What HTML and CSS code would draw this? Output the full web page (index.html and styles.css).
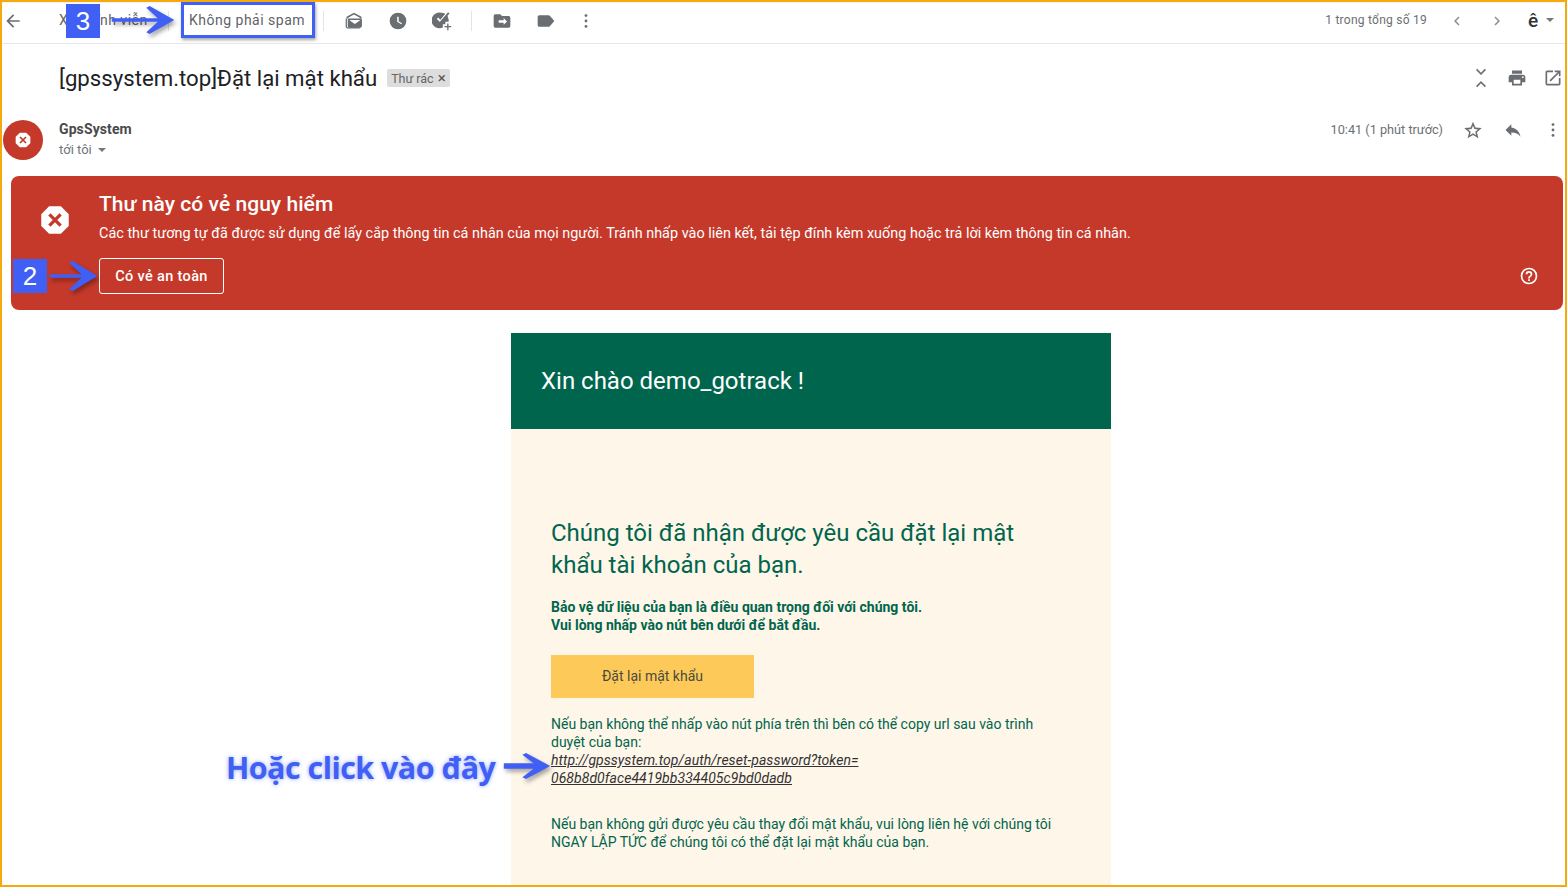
FILE: index.html
```html
<!DOCTYPE html>
<html lang="vi">
<head>
<meta charset="utf-8">
<title>Gmail</title>
<link rel="stylesheet" href="styles.css">
</head>
<body>
<div class="frame">
  <header class="toolbar">
    <svg class="ic back" viewBox="0 0 24 24"><path d="M20 11H7.800l5.600-5.600L12 4l-8 8 8 8 1.400-1.400L7.800 13H20z"/></svg>
    <span class="tb-text del">Xóa vĩnh viễn</span>
    <span class="sep s1"></span>
    <span class="tb-text notspam">Không phải spam</span>
    <span class="sep s2"></span>
    <div class="tb-icons g1">
      <svg class="ic" viewBox="0 0 24 24"><path d="M12 2 3 7v2h2V8l7-3.800L19 8v1h2V7z"/><path fill-rule="evenodd" d="M6 9h14a1.500 1.500 0 0 1 1.500 1.500V18a2 2 0 0 1-2 2H6.500a2 2 0 0 1-2-2v-7.500A1.500 1.500 0 0 1 6 9zm1 2.500 6 4 6-4v-.6H7z"/><path d="M2 9h1.500v10.500H19V21H4a2 2 0 0 1-2-2z"/></svg>
      <svg class="ic" viewBox="0 0 24 24"><path fill-rule="evenodd" d="M12 2a10 10 0 1 0 0 20 10 10 0 0 0 0-20zm-1 5h1.800v5.200l4 2.400-.9 1.400L11 13z"/></svg>
      <svg class="ic" viewBox="0 0 24 24"><path d="M11 2a9.500 9.500 0 0 1 5 1.400l-6 7.100-2.600-2.600-1.600 1.600 4.300 4.300 7.700-9A9.500 9.500 0 0 1 20 11.500a9 9 0 0 1-.2 1.500H16v3h-3v3.900A9.500 9.500 0 1 1 11 2z"/><path d="M18.200 15h1.600v3H23v1.600h-3.200V23h-1.600v-3.400H15V18h3.200z"/><path d="m19.300 1.500 1.700 1.400-11 12.800-1.500-1.500z"/></svg>
    </div>
    <span class="sep s3"></span>
    <div class="tb-icons g2">
      <svg class="ic" viewBox="0 0 24 24"><path fill-rule="evenodd" d="M4 4h6l2 2h8a2 2 0 0 1 2 2v10a2 2 0 0 1-2 2H4a2 2 0 0 1-2-2V6a2 2 0 0 1 2-2zm10 4.500V11H8v3h6v2.500l4-4z"/></svg>
      <svg class="ic" viewBox="0 0 24 24"><path d="M16.600 5.800A2 2 0 0 0 15 5H4a2 2 0 0 0-2 2v10a2 2 0 0 0 2 2h11a2 2 0 0 0 1.600-.8L22 12z"/></svg>
      <svg class="ic dots" viewBox="0 0 24 24"><circle cx="12" cy="5.500" r="1.700"/><circle cx="12" cy="12" r="1.700"/><circle cx="12" cy="18.500" r="1.700"/></svg>
    </div>
    <span class="count">1 trong tổng số 19</span>
    <svg class="chev prev" viewBox="0 0 24 24"><path d="M15.400 7.400 14 6l-6 6 6 6 1.400-1.400L10.800 12z"/></svg>
    <svg class="chev next" viewBox="0 0 24 24"><path d="M8.600 16.600 10 18l6-6-6-6-1.400 1.400L13.200 12z"/></svg>
    <span class="lang">ê</span>
    <span class="caret lang-caret"></span>
  </header>

  <section class="subject-row">
    <h1 class="subject">[gpssystem.top]Đặt lại mật khẩu</h1>
    <span class="chip">Thư rác <b>×</b></span>
    <div class="subject-icons">
      <svg class="ic expand" viewBox="0 0 24 24"><path d="M7.400 1 6 2.400l6 6 6-6L16.600 1 12 5.600zM12 15.600l-6 6L7.400 23l4.600-4.600 4.600 4.600 1.400-1.400z"/></svg>
      <svg class="ic" viewBox="0 0 24 24"><path fill-rule="evenodd" d="M19 8H5a3 3 0 0 0-3 3v6h4v4h12v-4h4v-6a3 3 0 0 0-3-3zm-3 11H8v-5h8zm3-7a1 1 0 1 1 0-2 1 1 0 0 1 0 2zM18 3H6v4h12z"/></svg>
      <svg class="ic" viewBox="0 0 24 24"><path d="M19 19H5V5h7V3H5a2 2 0 0 0-2 2v14a2 2 0 0 0 2 2h14a2 2 0 0 0 2-2v-7h-2zM14 3v2h3.600l-9.800 9.800 1.400 1.400L19 6.400V10h2V3z"/></svg>
    </div>
  </section>

  <section class="sender-row">
    <div class="avatar">
      <svg class="octagon small" viewBox="0 0 24 24"><path d="M7.300 1h9.400L23 7.300v9.400L16.700 23H7.300L1 16.700V7.300z" fill="#fff"/><path d="m7.500 7.500 9 9m0-9-9 9" stroke="#c5392a" stroke-width="2.600"/></svg>
    </div>
    <div class="sender-meta">
      <div class="sender-name">GpsSystem</div>
      <div class="sender-to">tới tôi <span class="caret"></span></div>
    </div>
    <span class="time">10:41 (1 phút trước)</span>
    <svg class="ic star" viewBox="0 0 24 24"><path fill-rule="evenodd" d="m12 2 2.900 7 7.600.6-5.800 5 1.800 7.400-6.500-4-6.500 4 1.800-7.400-5.800-5L9.100 9zm0 4.900-1.700 4-4.300.4 3.300 2.800-1 4.200 3.700-2.300 3.700 2.300-1-4.200 3.300-2.800-4.300-.4z"/></svg>
    <svg class="ic reply" viewBox="0 0 24 24"><path d="M10 9V5l-7 7 7 7v-4.100c5 0 8.500 1.600 11 5.100-1-5-4-10-11-11z"/></svg>
    <svg class="ic more" viewBox="0 0 24 24"><circle cx="12" cy="5.500" r="1.700"/><circle cx="12" cy="12" r="1.700"/><circle cx="12" cy="18.500" r="1.700"/></svg>
  </section>

  <section class="warning">
    <svg class="octagon big" viewBox="0 0 24 24"><path d="M7.300 1h9.400L23 7.300v9.400L16.700 23H7.300L1 16.700V7.300z" fill="#fff"/><path d="m7.500 7.500 9 9m0-9-9 9" stroke="#c5392a" stroke-width="2.600"/></svg>
    <div class="warning-body">
      <h2 class="warning-title">Thư này có vẻ nguy hiểm</h2>
      <p class="warning-text">Các thư tương tự đã được sử dụng để lấy cắp thông tin cá nhân của mọi người. Tránh nhấp vào liên kết, tải tệp đính kèm xuống hoặc trả lời kèm thông tin cá nhân.</p>
      <span class="safe-btn">Có vẻ an toàn</span>
    </div>
    <svg class="help" viewBox="0 0 24 24"><path fill="#fff" fill-rule="evenodd" d="M12 2a10 10 0 1 0 0 20 10 10 0 0 0 0-20zm0 18a8 8 0 1 1 0-16 8 8 0 0 1 0 16zm-1-4h2v2h-2zm1-10a4 4 0 0 0-4 4h2a2 2 0 1 1 4 0c0 2-3 1.800-3 5h2c0-2.200 3-2.500 3-5a4 4 0 0 0-4-4z"/></svg>
  </section>

  <main class="mail">
    <div class="mail-head">Xin chào demo_gotrack !</div>
    <div class="mail-body">
      <h3 class="mail-title">Chúng tôi đã nhận được yêu cầu đặt lại mật khẩu tài khoản của bạn.</h3>
      <p class="mail-strong">Bảo vệ dữ liệu của bạn là điều quan trọng đối với chúng tôi.<br>Vui lòng nhấp vào nút bên dưới để bắt đầu.</p>
      <span class="reset-btn">Đặt lại mật khẩu</span>
      <p class="mail-p">Nếu bạn không thể nhấp vào nút phía trên thì bên có thể copy url sau vào trình duyệt của bạn:<br><a class="mail-link">http://gpssystem.top/auth/reset-password?token=<br>068b8d0face4419bb334405c9bd0dadb</a></p>
      <p class="mail-p last">Nếu bạn không gửi được yêu cầu thay đổi mật khẩu, vui lòng liên hệ với chúng tôi NGAY LẬP TỨC để chúng tôi có thể đặt lại mật khẩu của bạn.</p>
    </div>
  </main>

  <div class="badge b3">3</div>
  <svg class="arrow a3" viewBox="0 0 76 34"><path d="M0 15h56L42 2l4-2 30 17-30 17-4-2 14-13H0z"/></svg>
  <div class="spam-box"></div>
  <div class="badge b2">2</div>
  <svg class="arrow a2" viewBox="0 0 54 34"><path d="M0 15h36L22 2l4-2 28 17-28 17-4-2 14-13H0z"/></svg>
  <div class="click-note">Hoặc click vào đây</div>
  <svg class="arrow a1" viewBox="0 0 50 28"><path d="M0 11h32L20 2l4-2 26 14-26 14-4-2 12-9H0z"/></svg>
</div>
</body>
</html>
```
FILE: styles.css
```css
* { box-sizing: border-box; }
html, body { margin: 0; padding: 0; background: #fff; }
body { font-family: Roboto, "Noto Sans", sans-serif; color: #5f6368; }
.frame {
  position: relative;
  width: 1567px;
  height: 887px;
  overflow: hidden;
  background: #fff;
  border: 2px solid #f4a90e;
}
h1, h2, h3, p { margin: 0; font-weight: 400; }
.ic { width: 20px; height: 20px; fill: #6a6d71; flex: none; display: block; }

.toolbar {
  display: flex;
  align-items: center;
  height: 43px;
  margin-top: -1px;
  padding-bottom: 2px;
  border-bottom: 1px solid #e6e6e6;
  box-shadow: inset 0 3px 3px -2px rgba(0,0,0,.12);
}
.back { margin-left: 1px; width: 20px; height: 20px; }
.tb-text { font-size: 14px; color: #5f6368; white-space: nowrap; letter-spacing: .5px; margin-bottom: 2px; }
.del { margin-left: 36px; width: 91px; }
.sep { width: 1px; height: 20px; background: #e4e4e4; flex: none; }
.s1 { margin-left: 18px; }
.notspam { margin-left: 20px; width: 116px; }
.s2 { margin-left: 18px; }
.tb-icons { display: flex; align-items: center; gap: 24px; }
.g1 { margin-left: 20px; }
.s3 { margin-left: 19px; }
.g2 { margin-left: 20px; }
.dots { margin-left: -4px; }
.count { margin-left: auto; font-size: 12px; color: #6b6f73; letter-spacing: .25px; margin-bottom: 2px; }
.chev { width: 18px; height: 18px; fill: #8b8e92; flex: none; }
.prev { margin-left: 21px; }
.next { margin-left: 22px; }
.lang { margin-left: 22px; font-size: 19px; font-weight: 500; color: #333; width: 10px; line-height: 20px; }
.caret {
  display: inline-block;
  width: 0; height: 0;
  border: 4px solid transparent;
  border-top: 4px solid #777;
  border-bottom: 0;
}
.lang-caret { margin: 0 11px 2px 8px; }

.subject-row { display: flex; align-items: center; height: 68px; padding: 0 2px 0 57px; }
.subject { font-size: 22.200px; color: #202124; white-space: nowrap; }
.chip {
  display: inline-flex;
  align-items: center;
  gap: 4px;
  margin-left: 10px;
  height: 18px;
  padding: 0 4px;
  font-size: 12.500px;
  background: #ddd;
  color: #666;
  border-radius: 2px;
  white-space: nowrap;
}
.chip b { font-weight: 400; color: #555; font-size: 15px; line-height: 18px; width: 8px; text-align: center; }
.subject-icons { display: flex; align-items: center; margin-left: auto; gap: 16px; }

.sender-row { display: flex; height: 64px; padding: 7px 0 0 1px; position: relative; }
.avatar {
  width: 40px; height: 40px; border-radius: 50%;
  background: #c5392a;
  display: flex; align-items: center; justify-content: center;
  margin-top: 1px;
  flex: none;
}
.octagon.small { width: 16px; height: 16px; }
.sender-meta { margin-left: 16px; }
.sender-name { font-size: 14px; font-weight: 700; color: #4a4a4a; line-height: 16px; margin-top: 2px; letter-spacing: .1px; }
.sender-to { font-size: 13px; color: #70757a; line-height: 16px; margin-top: 5px; }
.sender-to .caret { margin-left: 3px; vertical-align: 2px; }
.time { margin-left: auto; font-size: 12.700px; color: #6d7074; line-height: 16px; margin-top: 3px; }
.star { margin: 1px 0 0 20px; }
.reply { margin: 1px 0 0 20px; }
.more { margin: 1px 2px 0 20px; }

.warning {
  display: flex;
  margin: 0 2px 0 9px;
  height: 134px;
  background: #c5392a;
  border-radius: 8px;
  color: #fff;
  position: relative;
}
.octagon.big { width: 30px; height: 30px; margin: 29px 0 0 29px; flex: none; }
.warning-body { margin-left: 29px; padding-top: 15px; }
.warning-title { font-size: 21px; font-weight: 500; line-height: 26px; letter-spacing: .05px; }
.warning-text { font-size: 14.400px; line-height: 18px; margin-top: 8px; white-space: nowrap; letter-spacing: .02px; }
.safe-btn {
  display: inline-block;
  margin-top: 15px;
  width: 125px; height: 36px;
  line-height: 35px;
  text-align: center;
  border: 1px solid #fff;
  border-radius: 3px;
  font-size: 14.500px;
  font-weight: 500;
  letter-spacing: .35px;
}
.help { position: absolute; right: 24px; bottom: 24px; width: 20px; height: 20px; }

.mail { width: 600px; margin: 23px 0 0 509px; }
.mail-head {
  height: 96px;
  background: #00654d;
  color: #fff;
  font-size: 24px;
  line-height: 96px;
  padding-left: 30px;
}
.mail-body { background: #fef6e9; padding: 88px 40px 40px; color: #00654d; height: 600px; }
.mail-title { font-size: 24px; line-height: 32px; color: #00654d; }
.mail-strong { font-size: 14px; font-weight: 700; line-height: 18px; margin-top: 17px; }
.reset-btn {
  display: block;
  width: 203px; height: 43px;
  margin-top: 21px;
  background: #fdca5a;
  color: #4a4a3c;
  text-align: center;
  line-height: 43px;
  font-size: 14px;
}
.mail-p { font-size: 14px; line-height: 18px; margin-top: 17px; max-width: 505px; }
.mail-p.last { margin-top: 28px; }
.mail-link { color: #333; font-style: italic; text-decoration: underline; letter-spacing: .05px; }

.badge {
  position: absolute;
  width: 34px; height: 34px;
  background: #3f5ff5;
  color: #fff;
  font-size: 26px;
  line-height: 34px;
  text-align: center;
  font-family: "Liberation Sans", sans-serif;
}
.b3 { left: 64px; top: 2px; }
.b2 { left: 11px; top: 257px; }
.arrow { position: absolute; fill: #3f5ff5; filter: drop-shadow(2px 3px 2px rgba(0,0,0,.35)); }
.a3 { left: 104px; top: 4px; width: 74px; height: 28px; }
.a2 { left: 45px; top: 259px; width: 53px; height: 30px; }
.a1 { left: 501px; top: 751px; width: 48px; height: 26px; }
.spam-box {
  position: absolute;
  left: 179px; top: 0;
  width: 134px; height: 36px;
  border: 3px solid #3f5ff5;
  box-shadow: 1px 2px 3px rgba(0,0,0,.35);
}
.click-note {
  position: absolute;
  left: 224px; top: 744px;
  font-family: "Open Sans", sans-serif;
  font-size: 30.500px;
  font-weight: 700;
  line-height: 42px;
  letter-spacing: -.55px;
  color: #3f5ff5;
  text-shadow: 0 0 4px rgba(63,95,245,.55);
  white-space: nowrap;
}
```
